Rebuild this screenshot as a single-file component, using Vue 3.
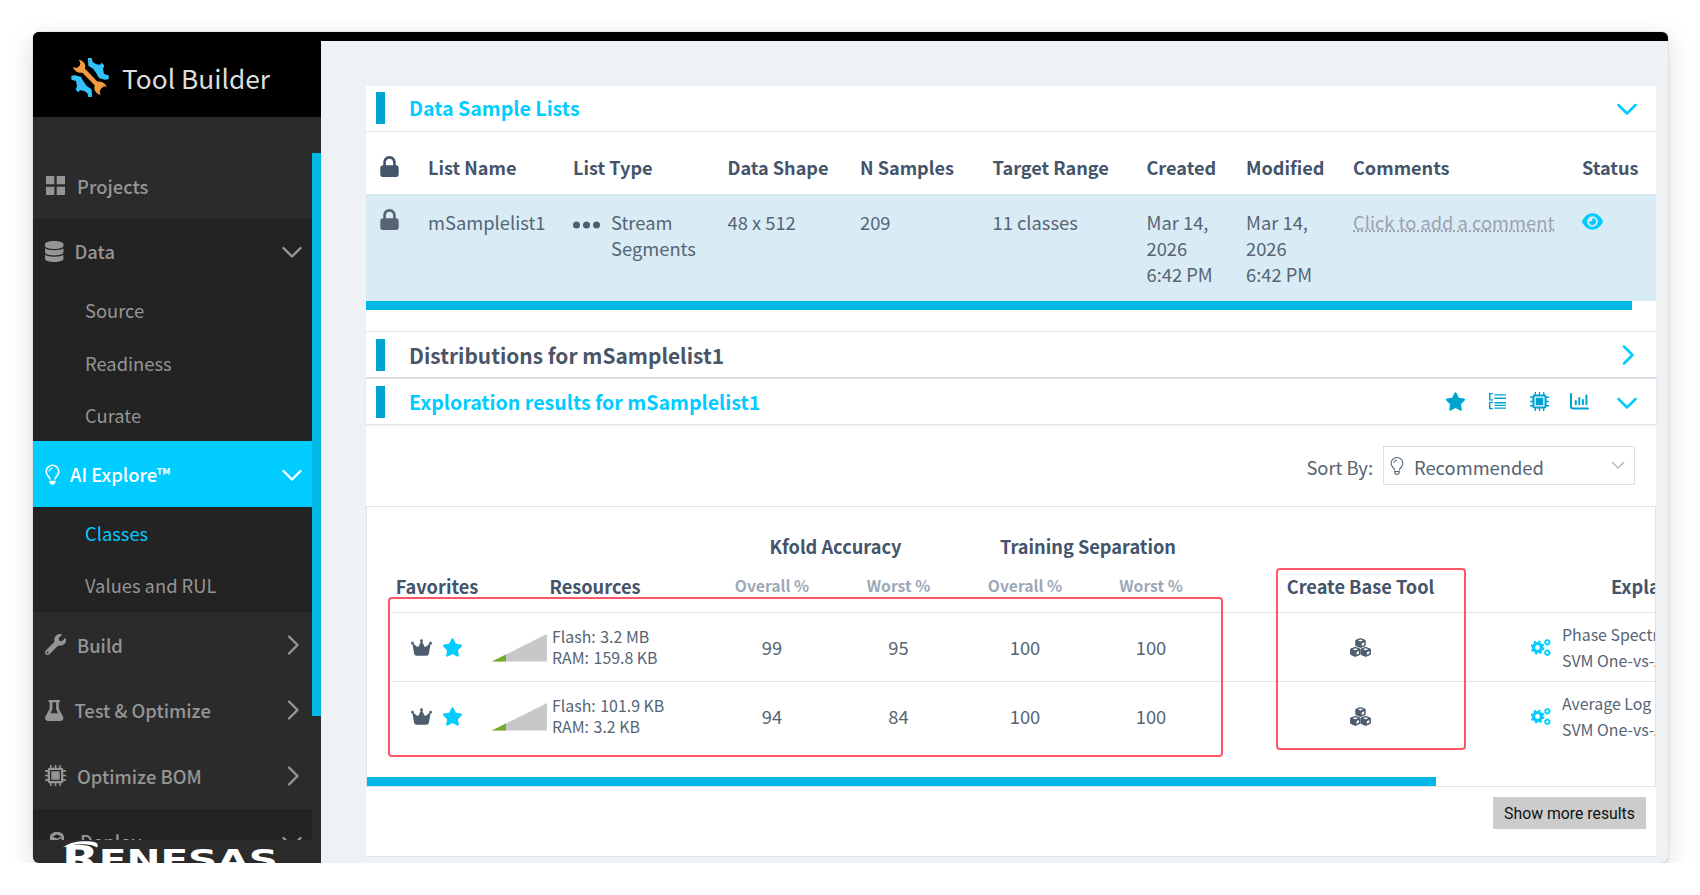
<script setup>
import { ref } from 'vue'

// FontAwesome-style solid icons
const icons = {
  lock: {
    box: '0 0 448 512',
    d: 'M400 224h-24v-72C376 68.2 307.8 0 224 0S72 68.2 72 152v72H64c-35 0-64 29-64 64v160c0 35 29 64 64 64h320c35 0 64-29 64-64V288c0-35-29-64-48-64zm-88 0H136v-72c0-48 39-88 88-88s88 40 88 88v72z',
  },
  grid: { box: '0 0 19 19', d: 'M0 0h8.3v8.3H0zM10.7 0H19v8.3h-8.3zM0 10.7h8.3V19H0zM10.7 10.7H19V19h-8.3z' },
  database: {
    box: '0 0 448 512',
    d: 'M448 73.143v45.714C448 159.143 347.667 192 224 192S0 159.143 0 118.857V73.143C0 32.857 100.333 0 224 0s224 32.857 224 73.143zM448 176v102.857C448 319.143 347.667 352 224 352S0 319.143 0 278.857V176c48.125 33.143 136.208 48.572 224 48.572S399.874 209.143 448 176zm0 160v102.857C448 479.143 347.667 512 224 512S0 479.143 0 438.857V336c48.125 33.143 136.208 48.572 224 48.572S399.874 369.143 448 336z',
  },
  bulb: {
    box: '0 0 384 512',
    d: 'M272 384c10-52 100-110 100-204A180 180 0 0 0 12 180c0 94 90 152 100 204h40c-8-70-100-120-100-204a140 140 0 0 1 280 0c0 84-92 134-100 204zM192 80c-55 0-100 45-100 100h30c0-39 31-70 70-70zM112 416v16c0 44 36 80 80 80s80-36 80-80v-16z',
  },
  bulbThin: {
    box: '0 0 384 512',
    d: 'M270 384c10-52 102-110 102-204A180 180 0 0 0 12 180c0 94 92 152 102 204h30c-8-70-104-120-104-204a152 152 0 0 1 304 0c0 84-96 134-104 204zM192 80c-55 0-100 45-100 100h24c0-42 34-76 76-76zM112 400v40c0 40 34 72 80 72s80-32 80-72v-40zM144 430h96c0 32-20 50-48 50s-48-18-48-50z',
  },
  wrench: {
    box: '0 0 512 512',
    d: 'M507.73 109.1c-2.24-9.03-13.54-12.09-20.12-5.51l-74.36 74.36-67.88-11.31-11.31-67.88 74.36-74.36c6.62-6.62 3.43-17.9-5.66-20.16-47.38-11.74-99.55.91-136.58 37.93-39.64 39.64-50.55 97.1-34.05 147.2L18.74 402.76c-24.99 24.99-24.99 65.51 0 90.5 24.99 24.99 65.51 24.99 90.5 0l213.21-213.21c50.12 16.71 107.47 5.68 147.37-34.22 37.07-37.07 49.7-89.32 37.91-136.73zM64 472c-13.25 0-24-10.75-24-24 0-13.26 10.75-24 24-24s24 10.74 24 24c0 13.25-10.75 24-24 24z',
  },
  flask: {
    box: '0 0 448 512',
    d: 'M437.2 403.5L336 215V56h8c13.3 0 20-10 20-24V24c0-13.3-10.7-24-24-24H108c-13.3 0-24 10.7-24 24v8c0 14 7 24 20 24h8v159L10.8 403.5C-18.5 450.6 15.3 512 70.9 512h306.2c55.7 0 89.4-61.5 60.1-108.5zM131 320l42-82c3-5 5-11 5-18V56h92v164c0 7 2 13 5 18l42 82z',
  },
  chip: {
    box: '0 0 19 19',
    d: 'M4.4 2.4h10.2a2 2 0 0 1 2 2v10.2a2 2 0 0 1-2 2H4.4a2 2 0 0 1-2-2V4.4a2 2 0 0 1 2-2zM4.5 4.5v10h10v-10zM5.7 5.7h7.6v7.6H5.7zM4.6 0h1.4v2.4H4.6zM8.8 0h1.4v2.4H8.8zM13 0h1.4v2.4H13zM4.6 16.6h1.4V19H4.6zM8.8 16.6h1.4V19H8.8zM13 16.6h1.4V19H13zM0 4.6h2.4V6H0zM0 8.8h2.4v1.4H0zM0 13h2.4v1.4H0zM16.6 4.6H19V6h-2.4zM16.6 8.8H19v1.4h-2.4zM16.6 13H19v1.4h-2.4z',
  },
  crown: {
    box: '0 32 576 448',
    d: 'M309 106c11.4-7 19-19.7 19-34c0-22.1-17.9-40-40-40s-40 17.9-40 40c0 14.4 7.6 27 19 34L209.7 220.6c-9.1 18.2-32.7 23.4-48.6 10.7L72 160c5-6.7 8-15 8-24c0-22.1-17.9-40-40-40S0 113.9 0 136s17.9 40 40 40c.2 0 .5 0 .7 0L86.4 427.4c5.5 30.4 32 52.6 63 52.6H426.6c30.9 0 57.4-22.1 63-52.6L535.3 176c.2 0 .5 0 .7 0c22.1 0 40-17.9 40-40s-17.9-40-40-40s-40 17.9-40 40c0 9 3 17.3 8 24l-89.1 71.3c-15.9 12.7-39.5 7.5-48.6-10.7L309 106z',
  },
  star: {
    box: '24 0 528 512',
    d: 'M316.9 18C311.6 7 300.4 0 288.1 0s-23.4 7-28.8 18L195 150.3 51.4 171.5c-12 1.8-22 10.2-25.7 21.7s-.7 24.2 7.9 32.7L137.8 329 113.2 474.7c-2 12 3 24.2 12.9 31.3s23 8 33.8 2.3l128.3-68.5 128.3 68.5c10.8 5.7 23.9 4.9 33.8-2.3s14.9-19.3 12.9-31.3L438.5 329 542.7 225.9c8.6-8.5 11.7-21.2 7.9-32.7s-13.7-19.9-25.7-21.7L381.2 150.3 316.9 18z',
  },
  eye: {
    box: '0 32 576 448',
    d: 'M288 32c-80.8 0-145.5 36.8-192.6 80.6C48.6 156 17.3 208 2.5 243.7c-3.3 7.9-3.3 16.7 0 24.6C17.3 304 48.6 356 95.4 399.4C142.5 443.2 207.2 480 288 480s145.5-36.8 192.6-80.6c46.8-43.5 78.1-95.4 93-131.1c3.3-7.9 3.3-16.7 0-24.6c-14.9-35.7-46.2-87.7-93-131.1C433.5 68.8 368.8 32 288 32zM144 256a144 144 0 1 1 288 0 144 144 0 1 1 -288 0zm144-64c0 35.3-28.7 64-64 64c-7.1 0-13.9-1.2-20.3-3.3c-5.5-1.8-11.9 1.6-11.7 7.4c.3 6.9 1.3 13.8 3.2 20.7c13.7 51.2 66.4 81.6 117.6 67.9s81.6-66.4 67.9-117.6c-11.1-41.5-47.8-69.4-88.6-71.1c-5.8-.2-9.2 6.1-7.4 11.7c2.1 6.4 3.3 13.2 3.3 20.3z',
  },
  tree: {
    box: '0 0 17 17',
    d: 'M0 0h4v1.3H1.5v4.9H4v1.3H0zM0 8.8h4v1.3H1.5v4.9H4v1.3H0zM5.5 1.2H17v1.4H5.5zM5.5 4.5H17v1.4H5.5zM5.5 9H17v1.4H5.5zM5.5 11.8H17v1.2H5.5zM5.5 14.4H17v1.4H5.5z',
  },
  chart: {
    box: '0 0 19 17',
    d: 'M0 1a1 1 0 0 1 2 0v12.2a1.3 1.3 0 0 0 1.3 1.3H18a1 1 0 0 1 0 2H3.3A3.3 3.3 0 0 1 0 13.2zM4.8 8a1 1 0 0 1 2 0v3.2a1 1 0 0 1-2 0zM8.3 5a1 1 0 0 1 2 0v6.2a1 1 0 0 1-2 0zM11.9 7a1 1 0 0 1 2 0v4.2a1 1 0 0 1-2 0zM15.4 2.5a1 1 0 0 1 2 0v8.7a1 1 0 0 1-2 0z',
  },
  package: {
    box: '0 0 14 19',
    d: 'M0 5C0 2 3 0 7 0s7 2 7 5v14H0zM2.5 4.5L7 6.5l4.5-2L7 2.5zM7.5 8v7l4-2V6z',
  },
}

const menu = ref([
  { label: 'Projects', icon: 'grid' },
  { label: 'Data', icon: 'database', open: true, children: ['Source', 'Readiness', 'Curate'] },
  { label: 'AI Explore™', icon: 'bulb', open: true, active: true, children: ['Classes', 'Values and RUL'] },
  { label: 'Build', icon: 'wrench', closed: true },
  { label: 'Test & Optimize', icon: 'flask', closed: true },
  { label: 'Optimize BOM', icon: 'chip', closed: true },
  { label: 'Deploy', icon: 'package', open: true, children: [] },
])
const currentPage = ref('Classes')

const listColumns = ['List Name', 'List Type', 'Data Shape', 'N Samples', 'Target Range', 'Created', 'Modified', 'Comments', 'Status']
const toolbar = ['star', 'tree', 'chip', 'chart']

const results = [
  { flash: '3.2 MB', ram: '159.8 KB', scores: [99, 95, 100, 100], feature: 'Phase Spectrum' },
  { flash: '101.9 KB', ram: '3.2 KB', scores: [94, 84, 100, 100], feature: 'Average Log' },
]

const cubes = [[10.5, 0], [5.3, 8.8], [15.7, 8.8]]
const cogs = [
  { x: 6.5, y: 8.5, r: 4, w: 3.2, t: 6, n: 8 },
  { x: 16.3, y: 3.3, r: 2, w: 1.6, t: 3, n: 8 },
  { x: 16.3, y: 13.7, r: 2, w: 1.6, t: 3, n: 8 },
]
// gear teeth are half of each step along the outer circle
const dash = (c) => {
  const step = (2 * Math.PI * c.t) / c.n
  return `${step * 0.5} ${step * 0.5}`
}
</script>

<template>
  <div class="window">
    <aside class="sidebar">
      <div class="brand">
        <svg class="brand-logo" viewBox="0 0 114 117">
          <g fill="#33c1fa">
            <path d="M51 0h11l3 12 11 7 11 1 5-6 8 8-4 11 3 15 14 4v12l-12 1-17-5-8-14-9-13-15-10z" />
            <path transform="rotate(180 57 58.5)" d="M51 0h11l3 12 11 7 11 1 5-6 8 8-4 11 3 15 14 4v12l-12 1-17-5-8-14-9-13-15-10z" />
          </g>
          <path
            fill="#f39a3f"
            d="M24 5c10 2 18 9 19 18l-1 9 38 39c12-3 21 4 28 15l-9-1-9 7-4 8 3 11c-11-3-19-12-19-22l1-7-37-38c-11 2-23-3-28-17l11 3 9-7 2-7z"
          />
        </svg>
        <span class="brand-name">Tool Builder</span>
      </div>
      <div class="nav-wrap">
        <nav class="nav">
          <div v-for="item in menu" :key="item.label" class="group" :class="{ open: item.open }">
            <div class="nav-item" :class="{ active: item.active }">
              <svg class="nav-icon" :class="item.icon" :viewBox="icons[item.icon].box">
                <path :d="icons[item.icon].d" fill="currentColor" fill-rule="evenodd" />
              </svg>
              <span>{{ item.label }}</span>
              <svg v-if="item.open" class="nav-arrow" viewBox="0 0 20 20"><path d="M1.5 7l8.5 8.5L18.5 7" /></svg>
              <svg v-if="item.closed" class="nav-arrow" viewBox="0 0 20 20"><path d="M7 1.5l8.5 8.5L7 18.5" /></svg>
            </div>
            <div v-for="child in item.children" :key="child" class="nav-child" :class="{ current: child === currentPage }">
              {{ child }}
            </div>
          </div>
        </nav>
        <div class="nav-scroll"></div>
      </div>
      <div class="vendor">
        <svg class="swoosh" viewBox="0 0 40 24">
          <path d="M0 7.5C7 2 17 .5 28 1.500c6 .5 8 3 6 6C28 3 12 3 0 7.500z" fill="#fff" />
        </svg>
        <span class="vendor-name"><b>R</b>ENESAS</span>
      </div>
    </aside>

    <main class="content">
      <div class="card">
        <section class="panel-head first">
          <i class="accent"></i>
          <h2 class="lit">Data Sample Lists</h2>
          <svg class="arrow" viewBox="0 0 20 20"><path d="M1.5 7l8.5 8.5L18.5 7" /></svg>
        </section>

        <div class="list-row list-head">
          <svg class="lock" :viewBox="icons.lock.box"><path :d="icons.lock.d" fill="currentColor" /></svg>
          <span v-for="col in listColumns" :key="col">{{ col }}</span>
        </div>
        <div class="list-row list-body">
          <svg class="lock" :viewBox="icons.lock.box"><path :d="icons.lock.d" fill="currentColor" /></svg>
          <span>mSamplelist1</span>
          <span class="type">
            <svg class="dots" viewBox="0 0 27 8">
              <circle cx="3.5" cy="4" r="3.5" /><circle cx="13.5" cy="4" r="3.5" /><circle cx="23.5" cy="4" r="3.5" />
            </svg>
            <span>Stream<br />Segments</span>
          </span>
          <span>48 x 512</span>
          <span>209</span>
          <span>11 classes</span>
          <span>Mar 14,<br />2026<br />6:42 PM</span>
          <span>Mar 14,<br />2026<br />6:42 PM</span>
          <span><a class="comment">Click to add a comment</a></span>
          <svg class="eye" :viewBox="icons.eye.box"><path :d="icons.eye.d" fill="currentColor" fill-rule="evenodd" /></svg>
        </div>
        <div class="list-scroll"></div>

        <section class="panel-head distributions">
          <i class="accent"></i>
          <h2>Distributions for mSamplelist1</h2>
          <svg class="arrow" viewBox="0 0 20 20"><path d="M7 1.5l8.5 8.5L7 18.5" /></svg>
        </section>
        <section class="panel-head exploration">
          <i class="accent"></i>
          <h2 class="lit">Exploration results for mSamplelist1</h2>
          <div class="tools">
            <svg v-for="name in toolbar" :key="name" :class="name" :viewBox="icons[name].box">
              <path :d="icons[name].d" fill="currentColor" fill-rule="evenodd" />
            </svg>
          </div>
          <svg class="arrow" viewBox="0 0 20 20"><path d="M1.5 7l8.5 8.5L18.5 7" /></svg>
        </section>

        <div class="sort">
          <label>Sort By:</label>
          <div class="select">
            <svg class="select-icon" :viewBox="icons.bulbThin.box"><path :d="icons.bulbThin.d" fill="currentColor" fill-rule="evenodd" /></svg>
            <span>Recommended</span>
            <svg class="select-arrow" viewBox="0 0 14 9"><path d="M1 1l6 6 6-6" /></svg>
          </div>
        </div>

        <div class="results">
          <div class="clip">
            <div class="grid groups">
              <span class="kfold">Kfold Accuracy</span>
              <span class="training">Training Separation</span>
            </div>
            <div class="grid heads">
              <span>Favorites</span>
              <span>Resources</span>
              <span class="sub">Overall %</span>
              <span class="sub">Worst %</span>
              <span class="sub">Overall %</span>
              <span class="sub">Worst %</span>
              <span>Create Base Tool</span>
              <span class="explain-head">Explanation</span>
            </div>
            <div v-for="row in results" :key="row.feature" class="grid result">
              <div class="favorite">
                <svg class="crown" :viewBox="icons.crown.box"><path :d="icons.crown.d" fill="currentColor" /></svg>
                <svg class="star" :viewBox="icons.star.box"><path :d="icons.star.d" fill="currentColor" /></svg>
              </div>
              <div class="resource">
                <svg class="wedge" viewBox="0 0 55 28">
                  <path d="M0 27.5L55 0v27.500z" fill="#c8c8c8" />
                  <path d="M0 27.5l14-7v7z" fill="#76ad26" />
                </svg>
                <div class="memory">
                  <div>Flash: <span>{{ row.flash }}</span></div>
                  <div>RAM: <span>{{ row.ram }}</span></div>
                </div>
              </div>
              <span v-for="(score, i) in row.scores" :key="i" class="score">{{ score }}</span>
              <div class="create">
                <svg class="cubes" viewBox="0 0 21 19">
                  <g v-for="(c, i) in cubes" :key="i" :transform="`translate(${c[0]} ${c[1]})`">
                    <path d="M0 .5L4.700 2.300V7.600L0 9.600-4.700 7.600V2.300z" fill="#4d5d70" stroke="#4d5d70" stroke-linejoin="round" />
                    <path d="M0 1.500L2.600 2.500 0 3.500-2.600 2.500zM1.200 5.400l2.500-1.100v2.500L1.200 8z" fill="#fff" />
                  </g>
                </svg>
              </div>
              <div class="explain">
                <svg class="cogs" viewBox="0 0 20 17">
                  <g v-for="(c, i) in cogs" :key="i" fill="none" stroke="#0cf">
                    <circle :cx="c.x" :cy="c.y" :r="c.r" :stroke-width="c.w" />
                    <circle :cx="c.x" :cy="c.y" :r="c.t" :stroke-width="c.w * 0.6" :stroke-dasharray="dash(c)" />
                  </g>
                </svg>
                <div class="pipeline">
                  <div>{{ row.feature }}</div>
                  <div>SVM One-vs-All</div>
                </div>
              </div>
            </div>
          </div>
          <div class="result-scroll"></div>
          <div class="mark mark-results"></div>
          <div class="mark mark-create"></div>
        </div>

        <div class="more">
          <button>Show more results</button>
        </div>
      </div>
    </main>
  </div>
</template>

<style>
body {
  margin: 0;
  background: #fff;
}
</style>

<style scoped>
* {
  box-sizing: border-box;
}

.window {
  display: flex;
  width: 1635px;
  height: 831px;
  margin: 32px 0 0 33px;
  overflow: hidden;
  border-radius: 6px;
  background: #eef2f5;
  box-shadow: 0 7px 26px rgba(0, 0, 0, 0.15), 0 0 1px rgba(0, 0, 0, 0.6);
  font-family: 'Noto Sans CJK SC', 'Noto Sans', sans-serif;
  font-size: 18.35px;
  line-height: 26px;
  color: #566474;
}

/* sidebar */
.sidebar {
  display: flex;
  flex-direction: column;
  width: 288px;
  flex: none;
  background: #2b2b2b;
  color: #959595;
}

.brand {
  display: flex;
  align-items: center;
  height: 85px;
  flex: none;
  padding: 6px 0 0 38px;
  background: #000;
}

.brand-logo {
  width: 38px;
  height: 39px;
}

.brand-name {
  margin-left: 13px;
  font-size: 26.3px;
  line-height: 40px;
  color: #ddd;
}

.nav-wrap {
  display: flex;
  height: 687px;
  margin-top: 36px;
  flex: none;
  overflow: hidden;
}

.nav {
  width: 279px;
}

.nav-scroll {
  width: 9px;
  height: 563px;
  background: #00b7e6;
}

.group.open {
  background: #232323;
}

.nav-item {
  display: flex;
  align-items: center;
  height: 65.6px;
  padding: 0 10px 0 12px;
  font-weight: 500;
}

.nav-item.active {
  background: #0cf;
  color: #fff;
}

.nav-icon {
  width: 21px;
  height: 21px;
  margin-right: 11px;
}

.nav-icon.grid {
  display: block;
  width: 19px;
  height: 19px;
  margin: 0 12px 0 1px;
}

.nav-icon.database,
.nav-icon.flask {
  width: 18.5px;
}

.nav-icon.bulb {
  width: 15px;
  margin-right: 10px;
}

.nav-icon.package {
  width: 14px;
  margin: 0 16px 0 5px;
}

.nav-arrow {
  width: 20px;
  height: 20px;
  margin-left: auto;
  fill: none;
  stroke: currentColor;
  stroke-width: 2.4;
  stroke-linecap: round;
  stroke-linejoin: round;
}

.nav-child {
  height: 52.4px;
  padding-left: 52px;
  line-height: 52.4px;
}

.nav-child.current {
  color: #0cf;
}

.vendor {
  position: relative;
  height: 23px;
  overflow: hidden;
  color: #fff;
}

.swoosh {
  position: absolute;
  left: 30px;
  top: 0;
  width: 40px;
  height: 24px;
}

.vendor-name {
  display: block;
  width: 190px;
  margin-left: 29px;
  font-family: 'DejaVu Sans', sans-serif;
  font-size: 29px;
  font-weight: 700;
  line-height: 34px;
  white-space: nowrap;
  transform: translateY(1px) scaleX(1.4);
  transform-origin: 0 0;
}

.vendor-name b {
  font-size: 34px;
}

/* content */
.content {
  flex: 1;
  min-width: 0;
  border-top: 9px solid #000;
  padding: 45px 12px 0 45px;
}

.card {
  height: 771px;
  background: #fff;
  border-bottom: 1px solid #dfe3e8;
}

.panel-head {
  display: flex;
  align-items: center;
  height: 46px;
  padding: 0 19px 0 10px;
  border-bottom: 1px solid #e3e5e8;
}

.accent {
  width: 9px;
  height: 32px;
  background: #00a3cf;
}

.panel-head h2 {
  margin: 0 auto 0 24px;
  font-size: 20.9px;
  font-weight: 700;
  line-height: 30px;
  color: #4a5568;
}

.panel-head h2.lit {
  font-size: 19.6px;
  color: #0cf;
}

.panel-head.first {
  padding-bottom: 1px;
}

.arrow {
  width: 20px;
  height: 20px;
  fill: none;
  stroke: #0cf;
  stroke-width: 2.5;
  stroke-linecap: round;
  stroke-linejoin: round;
}

.list-row {
  display: grid;
  grid-template-columns: 48px 145px 154.5px 132.5px 132.5px 154px 99.5px 107px 229px 60px;
  padding-left: 14px;
  white-space: nowrap;
}

.list-head {
  height: 62px;
  padding-top: 22px;
  font-size: 18.1px;
  font-weight: 700;
  color: #44546a;
}

.list-body {
  height: 107px;
  padding-top: 14px;
  background: #d9ecf5;
  border-top: 1px solid #dfe5ea;
}

.lock {
  width: 19px;
  height: 21px;
  margin-top: 2px;
}

.list-body .lock {
  margin-top: 0;
}

.type {
  display: flex;
}

.dots {
  width: 27px;
  height: 8px;
  margin: 12px 11px 0 0;
  fill: #505f70;
}

.comment {
  color: #9ca3af;
  text-decoration: underline dotted;
  text-underline-offset: 1px;
}

.eye {
  width: 21px;
  height: 17px;
  margin-top: 4px;
  color: #0cf;
}

.list-scroll {
  width: 1266px;
  height: 9px;
  background: #00b7e6;
}

.panel-head.distributions {
  height: 47px;
  margin-top: 21px;
  border-top: 1px solid #e3e5e8;
  border-bottom-color: #d8dbe0;
}

.panel-head.exploration {
  height: 47px;
  border-top: 1px solid #dfe1e5;
  box-shadow: 0 1px 3px rgba(0, 0, 0, 0.08);
}

.tools {
  display: flex;
  align-items: center;
  color: #00a3cf;
  margin-right: 28px;
}

.tools .star,
.tools .chip {
  width: 19px;
  height: 19px;
}

.tools .tree {
  width: 17px;
  height: 17px;
  margin: 0 24px;
}

.tools .chart {
  width: 19px;
  height: 17px;
  margin-left: 21px;
}

.sort {
  display: flex;
  align-items: center;
  justify-content: flex-end;
  height: 81px;
  padding-right: 21px;
}

.select {
  display: flex;
  align-items: center;
  width: 252px;
  height: 39px;
  margin-left: 10px;
  padding: 0 9px 0 6px;
  border: 1px solid #dcdfe6;
}

.sort label {
  padding-top: 2px;
}

.select span {
  margin: 2px auto 0 10px;
}

.select-icon {
  width: 14px;
  height: 18px;
}

.select-arrow {
  width: 14px;
  height: 9px;
  fill: none;
  stroke: #b4bac4;
  stroke-width: 1.5;
}

.results {
  position: relative;
  height: 281px;
  border: 1px solid #dfe2e6;
}

.clip {
  height: 270px;
  overflow: hidden;
}

.grid {
  display: grid;
  grid-template-columns: 88px 228px 126px 127px 126px 126px 293px 300px;
  width: 1414px;
  margin-left: 26px;
  text-align: center;
  white-space: nowrap;
}

.groups,
.heads {
  font-size: 18.2px;
  color: #44546a;
  font-weight: 700;
}

.groups {
  height: 65px;
  padding-top: 26px;
}

.kfold {
  grid-column: 3 / 5;
}

.training {
  grid-column: 5 / 7;
}

.heads {
  height: 40px;
  padding-top: 1px;
}

.sub {
  font-size: 15.7px;
  color: #9ca8b7;
}

.explain-head {
  padding-left: 104px;
  text-align: left;
}

.result {
  height: 69px;
  border-top: 1px solid #e3e5e8;
  align-items: center;
}

.favorite {
  display: flex;
  align-items: center;
  justify-content: center;
  gap: 11px;
  margin: 1px 2px 0 0;
}

.crown {
  width: 21px;
  height: 17px;
  color: #4d5d70;
}

.favorite .star {
  width: 19px;
  height: 19px;
  color: #0cf;
}

.resource {
  display: flex;
  align-items: center;
  padding-left: 11px;
}

.wedge {
  width: 55px;
  height: 28px;
  margin-top: 1px;
}

.memory {
  margin-left: 5px;
  font-size: 15.9px;
  line-height: 21px;
  text-align: left;
}

.memory span {
  margin-left: 1px;
}

.create {
  display: flex;
  justify-content: center;
}

.cubes {
  width: 21px;
  height: 19px;
}

.explain {
  display: flex;
  align-items: center;
  padding-left: 24px;
  font-size: 15.9px;
  text-align: left;
}

.cogs {
  width: 20px;
  height: 17px;
  margin-right: 11px;
}

.pipeline {
  padding-top: 2px;
}

.result-scroll {
  width: 1069px;
  height: 9px;
  background: #00b7e6;
}

.mark {
  position: absolute;
  border: 2px solid #ff5566;
  border-radius: 4px;
}

.mark-results {
  left: 21px;
  top: 90px;
  width: 835px;
  height: 160px;
}

.mark-create {
  left: 909px;
  top: 61px;
  width: 190px;
  height: 182px;
}

.more {
  display: flex;
  justify-content: flex-end;
  padding: 10px 10px 0 0;
}

.more button {
  width: 153px;
  height: 32px;
  padding: 0;
  border: 0;
  background: #ccc;
  color: #111;
  font-family: Roboto, sans-serif;
  font-size: 15.8px;
}
</style>
